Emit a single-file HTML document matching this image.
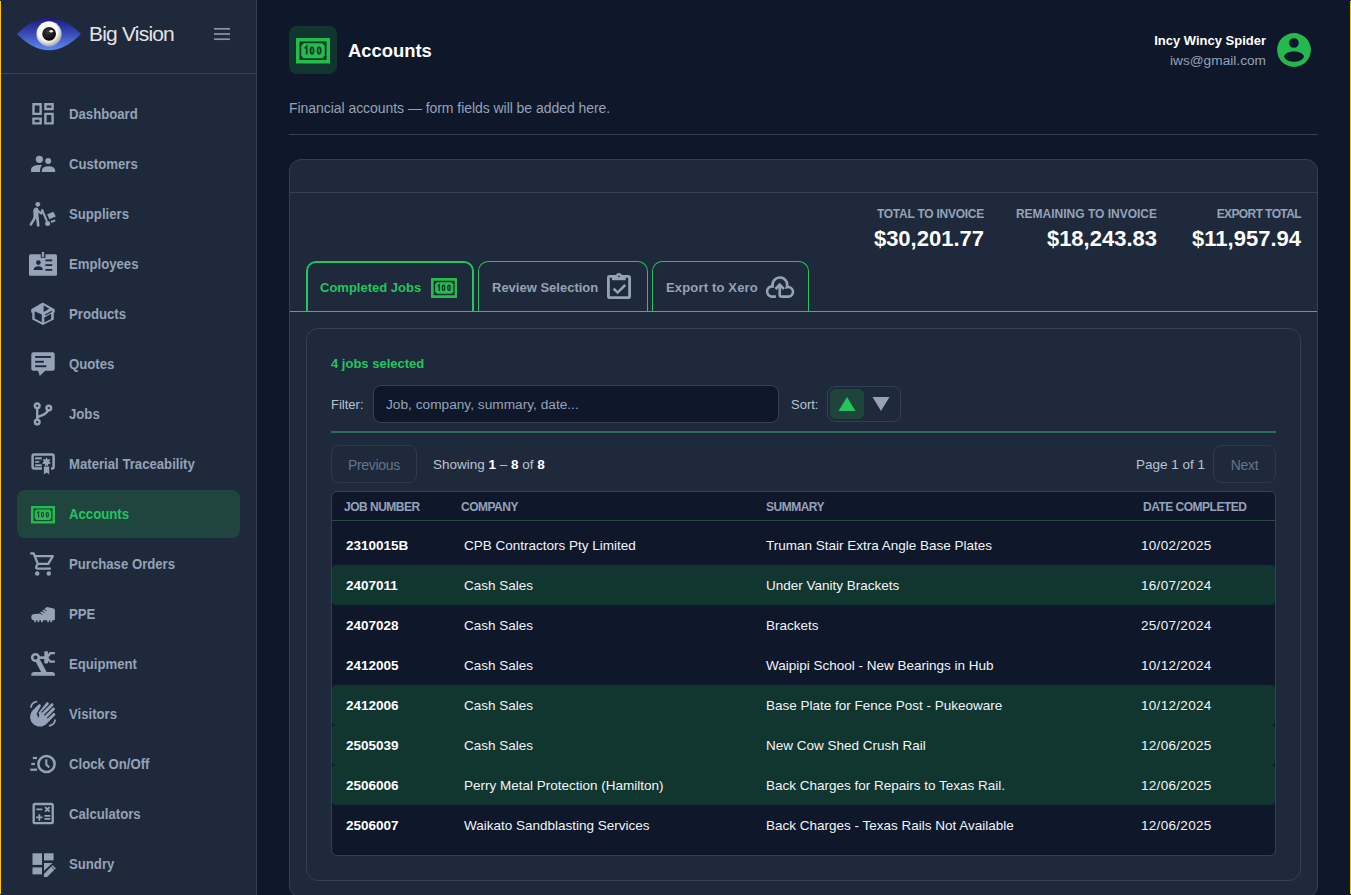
<!DOCTYPE html>
<html><head><meta charset="utf-8"><title>Accounts</title>
<style>
*{box-sizing:border-box;margin:0;padding:0}
html,body{width:1351px;height:895px;overflow:hidden;background:#0f172a;font-family:"Liberation Sans",sans-serif;}
.abs{position:absolute}
.t{position:absolute;white-space:nowrap}
#side{position:absolute;left:0;top:0;width:257px;height:895px;background:#1e293b;border-right:1px solid #334155}
#side .sep{position:absolute;left:0;top:73px;width:256px;height:1px;background:#334155}
.nav{position:absolute;left:17px;width:223px;height:48px;border-radius:8px}
.nav span{position:absolute;left:52px;top:0;line-height:48px;font-size:14px;font-weight:bold;color:#94a3b8;white-space:nowrap;transform:scaleX(0.94);transform-origin:0 0}
.nav.active{background:#1f453e}
.nav.active span{color:#22c55e}
.frame{position:absolute;top:1px;width:1px;height:893px;background:#ffc300}
#card{position:absolute;left:289px;top:159px;width:1029px;height:739px;background:#1e293b;border:1px solid #334155;border-radius:12px}
.tab{position:absolute;top:261px;height:51px;border:1px solid #22c55e;border-bottom:none;border-radius:10px 10px 0 0;background:#1e293b}
.tab span{position:absolute;top:0;line-height:52px;font-size:13px;font-weight:bold;color:#94a3b8;white-space:nowrap}
.tab.active{border-width:2px;border-bottom:none}
.tab.active span{color:#22c55e;line-height:50px}
#inner{position:absolute;left:306px;top:328px;width:995px;height:553px;border:1px solid #334155;border-radius:12px;background:#1e293b}
.btn{position:absolute;top:445px;height:38px;border:1px solid #2d3a4d;border-radius:8px}
.btn span{position:absolute;left:0;right:0;top:1px;text-align:center;line-height:36px;font-size:14px;letter-spacing:-0.3px;color:#64748b}
#table{position:absolute;left:331px;top:491px;width:945px;height:365px;background:#0f172a;border:1px solid #334155;border-radius:6px;overflow:hidden}
.th{position:absolute;top:1px;line-height:29px;font-size:12px;font-weight:bold;color:#94a3b8;letter-spacing:-0.5px;white-space:nowrap}
.row{position:absolute;left:0;width:943px;height:40px;border-radius:4px}
.row.sel{background:#11352f}
.row span{position:absolute;top:1px;line-height:40px;font-size:13.5px;color:#f1f5f9;white-space:nowrap}
.row span.jn{font-weight:bold;color:#fff}
</style></head><body>
<div id="side">
  <div class="sep"></div>
  <svg class="abs" style="left:14px;top:14px" width="72" height="40" viewBox="14 14 72 40">
<defs><linearGradient id="eg" x1="0" y1="0" x2="0" y2="1"><stop offset="0" stop-color="#1c1a7c"/><stop offset="0.5" stop-color="#3a4cb8"/><stop offset="1" stop-color="#5b8ef0"/></linearGradient>
<radialGradient id="wb" cx="0.45" cy="0.4" r="0.6"><stop offset="0.6" stop-color="#ffffff"/><stop offset="1" stop-color="#a8a8a8"/></radialGradient>
<radialGradient id="pp" cx="0.4" cy="0.35" r="0.7"><stop offset="0" stop-color="#3a3a3a"/><stop offset="1" stop-color="#000"/></radialGradient></defs>
<path d="M17 34 Q49 1.5 81 34 Q49 66.5 17 34 Z" fill="url(#eg)"/>
<circle cx="49" cy="33.8" r="12.6" fill="url(#wb)"/>
<circle cx="49.1" cy="33.8" r="6.9" fill="url(#pp)"/>
<ellipse cx="51.2" cy="31.3" rx="1.9" ry="1.3" fill="#fff" opacity="0.9"/>
</svg>
  <div class="abs" style="left:89px;top:20px;font-size:21px;color:#e2e4e8;letter-spacing:-0.8px;line-height:28px">Big Vision</div>
  <svg class="abs" style="left:210px;top:24px" width="24" height="20" viewBox="210 24 24 20"><g stroke="#8795aa" stroke-width="1.7"><line x1="214" y1="28.8" x2="230" y2="28.8"/><line x1="214" y1="34" x2="230" y2="34"/><line x1="214" y1="39.2" x2="230" y2="39.2"/></g></svg>
  <div class="nav" style="top:90px"><span>Dashboard</span></div>
<div class="nav" style="top:140px"><span>Customers</span></div>
<div class="nav" style="top:190px"><span>Suppliers</span></div>
<div class="nav" style="top:240px"><span>Employees</span></div>
<div class="nav" style="top:290px"><span>Products</span></div>
<div class="nav" style="top:340px"><span>Quotes</span></div>
<div class="nav" style="top:390px"><span>Jobs</span></div>
<div class="nav" style="top:440px"><span>Material Traceability</span></div>
<div class="nav active" style="top:490px"><span>Accounts</span></div>
<div class="nav" style="top:540px"><span>Purchase Orders</span></div>
<div class="nav" style="top:590px"><span>PPE</span></div>
<div class="nav" style="top:640px"><span>Equipment</span></div>
<div class="nav" style="top:690px"><span>Visitors</span></div>
<div class="nav" style="top:740px"><span>Clock On/Off</span></div>
<div class="nav" style="top:790px"><span>Calculators</span></div>
<div class="nav" style="top:840px"><span>Sundry</span></div>
<svg class="abs" style="left:0;top:0" width="257" height="895"><g transform="translate(26,98)"><g transform="translate(2.7,1.5) scale(1.194)"><path fill="#94a3b8" d="M19 5v2h-4V5h4M9 5v6H5V5h4m10 8v6h-4v-6h4M9 17v2H5v-2h4M21 3h-8v6h8V3zM11 3H3v10h8V3zm10 8h-8v10h8V11zm-10 4H3v6h8v-6z"/></g></g><g transform="translate(26,148)"><g fill="#94a3b8"><circle cx="13.4" cy="11.3" r="3.6"/><circle cx="22.2" cy="13" r="3"/>
<path d="M5.1 24.1 V21.2 Q5.4 17.1 13.5 16.9 L16.1 16.9 Q14.3 18.6 14.1 21.2 L14.1 24.1 Z"/>
<path d="M15.9 24.1 V22.2 Q16.3 18.2 22.5 18.2 Q28.7 18.2 29.1 22.2 V24.1 Z"/></g></g><g transform="translate(26,198)"><g fill="#94a3b8" stroke="#94a3b8" stroke-linecap="round">
<circle cx="11.8" cy="6.3" r="2.4" stroke="none"/>
<path d="M7.3 12.5 Q7.8 9.6 10.3 9.6 Q12.6 9.7 12.6 12.5 L12.4 20.4 L7.5 20.4 Z" stroke="none"/>
<line x1="8.8" y1="19.8" x2="4.9" y2="26.4" stroke-width="2.6"/>
<line x1="11.4" y1="19.8" x2="12.2" y2="27.3" stroke-width="2.7"/>
<polyline points="11.8,12.8 15.3,15.6 16.4,12.4" fill="none" stroke-width="2.1" stroke-linejoin="round"/>
<line x1="16.3" y1="12.3" x2="20.6" y2="22.5" stroke-width="2.1"/>
<circle cx="21.6" cy="25.4" r="2.5" stroke="none"/>
<polygon points="21.1,16.3 27.4,13.7 29.8,18.6 23.4,21.3" stroke="none"/>
<polygon points="24.6,23 28.9,21.4 29.6,23.3 25.3,25" stroke="none"/></g></g><g transform="translate(26,248)"><rect x="3" y="6.3" width="28" height="21.5" rx="1.6" fill="#94a3b8"/>
<rect x="14.8" y="3" width="4.6" height="6.8" fill="#1e293b"/>
<rect x="15.9" y="3.9" width="2.2" height="5" fill="#94a3b8"/>
<g fill="#1e293b"><circle cx="12.4" cy="14.6" r="2.3"/><path d="M7.6 21.9 Q8 18.3 12.25 18.3 Q16.5 18.3 16.9 21.9 Z"/>
<rect x="19.4" y="11.5" width="6.8" height="1.8"/><rect x="19.4" y="16.2" width="6.8" height="1.8"/><rect x="19.4" y="21" width="6.8" height="1.8"/></g></g><g transform="translate(26,298)"><polygon fill="#94a3b8" points="16.7,4.6 28.7,11.2 28.7,14.6 27.8,14.8 27.8,21.6 16.9,27 6.3,21.6 6.3,14.8 5.2,14.6 5.2,11.2"/>
<g fill="#1e293b"><polygon points="8.6,13.3 15.8,16.6 15.8,24.2 8.6,20.6"/><polygon points="17.6,7.3 23.3,10.7 17.6,14.0"/>
<polygon points="18.3,19.4 25.1,15.8 25.1,21 18.3,24.5"/></g>
<line x1="19.2" y1="17" x2="26" y2="13.2" stroke="#1e293b" stroke-width="1.3"/></g><g transform="translate(26,348)"><path fill="#94a3b8" d="M7.3 4.2 H26.7 Q28.7 4.2 28.7 6.2 V20.8 Q28.7 22.8 26.7 22.8 H19.2 L13.8 28 L12 22.8 H7.3 Q5.3 22.8 5.3 20.8 V6.2 Q5.3 4.2 7.3 4.2 Z"/>
<g fill="#1e293b"><rect x="9.1" y="8" width="15.8" height="1.9"/><rect x="9.1" y="12.8" width="8.8" height="1.9"/><rect x="9.1" y="17.3" width="11.2" height="1.9"/></g></g><g transform="translate(26,398)"><g fill="none" stroke="#94a3b8" stroke-width="2.4"><circle cx="11.2" cy="7.8" r="2.35"/><circle cx="22.8" cy="10.1" r="2.35"/><circle cx="11.2" cy="24.1" r="2.35"/>
<line x1="11.2" y1="10.2" x2="11.2" y2="21.7"/><path d="M11.4 19.2 C14 17.4 19.5 17.6 21.8 12.4"/></g></g><g transform="translate(26,448)"><path fill="none" stroke="#94a3b8" stroke-width="2.5" d="M16 20.6 H8.1 Q6.6 20.6 6.6 19.1 V8.1 Q6.6 6.6 8.1 6.6 H26.1 Q27.6 6.6 27.6 8.1 V19.1 Q27.6 20.6 26.1 20.6 H25.1"/>
<g fill="#94a3b8"><rect x="9.1" y="9.3" width="6.7" height="1.7"/><rect x="9.1" y="13.1" width="4.2" height="1.7"/><rect x="9.1" y="16.3" width="6.7" height="1.7"/>
<polygon points="20.5,9.2 21.7,11.6 24.2,11.1 23.3,13.6 24.9,15.6 22.3,15.9 21.7,18.4 20.5,16.9 19.3,18.4 18.7,15.9 16.1,15.6 17.7,13.6 16.8,11.1 19.3,11.6"/>
<path d="M17.9 18.6 H23.2 V26.6 L20.55 24.6 L17.9 26.6 Z"/></g>
<g fill="#94a3b8" opacity="0.45"><rect x="9.1" y="11.2" width="6.7" height="1"/><rect x="9.1" y="18.3" width="6.7" height="1"/></g></g><g transform="translate(26,548)"><g fill="none" stroke="#94a3b8" stroke-width="2.3" stroke-linejoin="round"><path d="M4.2 5.3 H7.6 L11.8 15.8 M8.6 8.1 H26.8 L22.2 15.8 H11.8 L10.3 18.5 Q9.7 20.7 11.6 20.7 H24.9"/></g>
<g fill="#94a3b8"><circle cx="11.2" cy="25.5" r="2.2"/><circle cx="22.8" cy="25.5" r="2.2"/></g></g><g transform="translate(26,598)"><path fill="#94a3b8" d="M5.3 19.2 Q5.3 16.2 8.4 16 L13 15.7 L20 9.6 Q21 8.8 22.2 9.2 L27.8 10.6 Q28.9 11 28.9 12.2 V21.4 Q28.9 22.2 28 22.2 H7.8 Q5.3 22 5.3 19.2 Z"/>
<g fill="#94a3b8"><polygon points="8,22 10.2,22 9.8,24.2 8.4,24.2"/><polygon points="11.3,22 13.5,22 13.1,24.2 11.7,24.2"/><polygon points="14.9,22 17.1,22 16.7,24.2 15.3,24.2"/><polygon points="21,22 23.2,22 22.8,24.2 21.4,24.2"/><polygon points="24.1,22 26.3,22 25.9,24.2 24.5,24.2"/></g>
<g stroke="#1e293b" stroke-width="0.9"><line x1="13.6" y1="15.1" x2="16.4" y2="16.5"/><line x1="15.8" y1="13.2" x2="18.6" y2="14.6"/><line x1="18" y1="11.3" x2="20.6" y2="12.8"/></g></g><g transform="translate(26,648)"><g fill="#94a3b8"><path d="M5.3 27.7 V26.6 Q5.3 24 8.2 24 H26 Q28.9 24 28.9 26.6 V27.7 Z"/>
<polygon points="9.4,13.2 13.8,11.2 20.8,24.2 15.2,24.2"/>
<rect x="12.5" y="8.3" width="6.5" height="2.7"/><rect x="18.3" y="3.3" width="3.7" height="12.2" rx="1"/></g>
<circle cx="9.5" cy="9.5" r="3.3" fill="none" stroke="#94a3b8" stroke-width="2.6"/>
<path fill="none" stroke="#94a3b8" stroke-width="2.3" d="M21 9.6 L24.2 5.2 H28.9 M21 9.6 L24.2 13.7 H28.9"/></g><g transform="translate(26,698)"><g transform="translate(3.03,1.68) scale(1.17)"><path fill="#94a3b8" d="M23 17c0 3.31-2.69 6-6 6v-1.5c2.48 0 4.5-2.02 4.5-4.5H23zM1 7c0-3.31 2.69-6 6-6v1.5C4.52 2.5 2.5 4.52 2.5 7H1zm7.01-2.68l-4.6 4.6c-3.22 3.22-3.22 8.45 0 11.67s8.45 3.22 11.67 0l7.07-7.07c.49-.49.49-1.28 0-1.77-.49-.49-1.28-.49-1.77 0l-4.42 4.42-.71-.71 6.54-6.54c.49-.49.49-1.28 0-1.77s-1.28-.49-1.77 0L13.5 13.69l-.71-.71 7.78-7.78c.49-.49.49-1.28 0-1.77-.49-.49-1.28-.49-1.77 0l-7.78 7.78-.69-.7 6.19-6.19c.49-.49.49-1.28 0-1.77-.49-.49-1.28-.49-1.77 0L7.9 11.4c1.09 1.1 1.1 2.86.03 3.97l-.71-.71c.39-.39.39-1.02 0-1.41l-.35-.35c-.2-.2-.31-.47-.31-.74 0-.27.11-.54.31-.74L9.78 6.1c.49-.49.49-1.28 0-1.77-.48-.5-1.28-.5-1.77-.01z"/></g></g><g transform="translate(26,748)"><g fill="none" stroke="#94a3b8"><circle cx="20.5" cy="16" r="8.1" stroke-width="2.5"/><path d="M20.3 11.3 V16.6 L23.2 19.5" stroke-width="2.1"/>
<line x1="6.8" y1="10" x2="11" y2="10" stroke-width="2.2"/><line x1="5.3" y1="16" x2="8.9" y2="16" stroke-width="2.2"/><line x1="4.2" y1="21.7" x2="11" y2="21.7" stroke-width="2.2"/></g></g><g transform="translate(26,798)"><g transform="translate(2.93,1.3) scale(1.19)"><path fill="#94a3b8" d="M19 3H5c-1.1 0-2 .9-2 2v14c0 1.1.9 2 2 2h14c1.1 0 2-.9 2-2V5c0-1.1-.9-2-2-2zm0 16H5V5h14v14z M6.25 7.72h5v1.5h-5z M13 15.75h5v1.5h-5z M13 13.25h5v1.5h-5z M8 18h1.5v-2h2v-1.5h-2v-2H8v2H6v1.5h2z M14.09 10.95l1.41-1.41 1.41 1.41 1.06-1.06-1.41-1.42 1.41-1.41L16.91 6 15.5 7.41 14.09 6l-1.06 1.06 1.41 1.41-1.41 1.42z"/></g></g><g transform="translate(26,848)"><g fill="#94a3b8"><rect x="6.5" y="5.3" width="9.5" height="11.6"/><rect x="18" y="5.3" width="9.6" height="7.1"/><rect x="6.5" y="19.4" width="9.5" height="7"/>
<polygon points="18,15 26.6,15 18,22.8"/><polygon points="17.9,25.9 26.5,17.3 29.8,20.3 21.2,28.9 17.9,28.9"/></g>
<line x1="25.3" y1="18.5" x2="28.4" y2="21.6" stroke="#1e293b" stroke-width="0.8"/></g></svg><svg class="abs" style="left:31px;top:506px" width="24" height="17.5" viewBox="0 0 40 30" preserveAspectRatio="none">
<rect x="0" y="0" width="40" height="30" fill="#23bd4c"/>
<rect x="4.1" y="4.1" width="31.8" height="21.8" fill="#1f453e"/>
<polygon points="9.2,6.2 30.8,6.2 33.8,9.2 33.8,20.8 30.8,23.8 9.2,23.8 6.2,20.8 6.2,9.2" fill="#23bd4c"/>
<g fill="none" stroke="#1f453e" stroke-width="2.1"><path d="M10.2 12.2 L12.6 10.1 V19.5"/><ellipse cx="18.9" cy="14.75" rx="1.8" ry="3.8"/><ellipse cx="27.2" cy="14.75" rx="1.8" ry="3.8"/></g>
</svg>
</div>

<div class="abs" style="left:289px;top:26px;width:48px;height:48px;border-radius:8px;background:#11352f"></div>
<svg class="abs" style="left:296px;top:38px" width="34" height="25.5" viewBox="0 0 40 30" preserveAspectRatio="none">
<rect x="0" y="0" width="40" height="30" fill="#23bd4c"/>
<rect x="4.1" y="4.1" width="31.8" height="21.8" fill="#11352f"/>
<polygon points="9.2,6.2 30.8,6.2 33.8,9.2 33.8,20.8 30.8,23.8 9.2,23.8 6.2,20.8 6.2,9.2" fill="#23bd4c"/>
<g fill="none" stroke="#11352f" stroke-width="2.1"><path d="M10.2 12.2 L12.6 10.1 V19.5"/><ellipse cx="18.9" cy="14.75" rx="1.8" ry="3.8"/><ellipse cx="27.2" cy="14.75" rx="1.8" ry="3.8"/></g>
</svg>
<div class="t" style="left:348px;top:39px;font-size:18.4px;font-weight:bold;color:#fff;line-height:24px">Accounts</div>
<div class="t" style="left:289px;top:98px;font-size:14px;color:#94a3b8;line-height:20px;letter-spacing:-0.05px">Financial accounts — form fields will be added here.</div>
<div class="abs" style="left:289px;top:134px;width:1029px;height:1px;background:#334155"></div>
<div class="t" style="right:85px;top:32px;font-size:13px;font-weight:bold;color:#fff;line-height:18px">Incy Wincy Spider</div>
<div class="t" style="right:85px;top:51px;font-size:13.7px;color:#94a3b8;line-height:20px">iws@gmail.com</div>
<svg class="abs" style="left:1272px;top:28px" width="44" height="44" viewBox="0 0 44 44">
<circle cx="22" cy="22" r="16.9" fill="#23b94c"/><circle cx="21.9" cy="15" r="4.85" fill="#0f172a"/>
<path d="M12 28.4 C13.5 21.8 30.5 21.8 32 28.4 C30 35.5 14 35.5 12 28.4 Z" fill="#0f172a"/></svg>
<div id="card">
  <div class="abs" style="left:0;top:32px;width:1027px;height:1px;background:#334155"></div>
</div>
<div class="t" style="right:367px;top:206px;font-size:12px;font-weight:bold;color:#94a3b8;letter-spacing:-0.25px;line-height:16px">TOTAL TO INVOICE</div>
<div class="t" style="right:194px;top:206px;font-size:12px;font-weight:bold;color:#94a3b8;letter-spacing:0px;line-height:16px">REMAINING TO INVOICE</div>
<div class="t" style="right:50px;top:206px;font-size:12px;font-weight:bold;color:#94a3b8;letter-spacing:-0.6px;line-height:16px">EXPORT TOTAL</div>
<div class="t" style="right:367px;top:225px;font-size:22px;font-weight:bold;color:#fff;line-height:28px">$30,201.77</div>
<div class="t" style="right:194px;top:225px;font-size:22px;font-weight:bold;color:#fff;line-height:28px">$18,243.83</div>
<div class="t" style="right:50px;top:225px;font-size:22px;font-weight:bold;color:#fff;line-height:28px">$11,957.94</div>
<div class="tab active" style="left:306px;width:168px"><span style="left:12px">Completed Jobs</span></div>
<div class="tab" style="left:478px;width:170px"><span style="left:13px">Review Selection</span></div>
<div class="tab" style="left:652px;width:157px"><span style="left:13px;letter-spacing:0.17px">Export to Xero</span></div>
<div class="abs" style="left:290px;top:311px;width:1027px;height:1px;background:#22c55e"></div>
<svg class="abs" style="left:431px;top:278px" width="26.4" height="20" viewBox="0 0 40 30" preserveAspectRatio="none">
<rect x="0" y="0" width="40" height="30" fill="#23bd4c"/>
<rect x="4.1" y="4.1" width="31.8" height="21.8" fill="#1e293b"/>
<polygon points="9.2,6.2 30.8,6.2 33.8,9.2 33.8,20.8 30.8,23.8 9.2,23.8 6.2,20.8 6.2,9.2" fill="#23bd4c"/>
<g fill="none" stroke="#1e293b" stroke-width="2.1"><path d="M10.2 12.2 L12.6 10.1 V19.5"/><ellipse cx="18.9" cy="14.75" rx="1.8" ry="3.8"/><ellipse cx="27.2" cy="14.75" rx="1.8" ry="3.8"/></g>
</svg>
<svg class="abs" style="left:600px;top:268px" width="36" height="36" viewBox="0 0 36 36">
<rect x="8.4" y="8.4" width="21.2" height="21.2" rx="1.4" fill="none" stroke="#94a3b8" stroke-width="2.8"/>
<rect x="12" y="7" width="13.7" height="5.2" fill="#94a3b8"/><circle cx="18.9" cy="8" r="2.9" fill="#94a3b8"/><circle cx="18.9" cy="8.3" r="0.9" fill="#1e293b"/>
<polyline points="13.6,20.6 17.6,24.6 25.2,17" fill="none" stroke="#94a3b8" stroke-width="2.5"/></svg>
<svg class="abs" style="left:762px;top:268px" width="36" height="36" viewBox="0 0 36 36">
<path fill="none" stroke="#94a3b8" stroke-width="2.6" d="M13.9 28.6 H9.8 A5.1 5.1 0 1 1 10.6 18.4 A7.4 7.4 0 1 1 24.9 19.2 A4.8 4.8 0 1 1 26.6 28.6 H19.6 Q17.7 28.6 17.7 26.7 V16.8 M13.5 21 L17.7 16.6 L21.9 21"/></svg>
<div id="inner"></div>
<div class="t" style="left:331px;top:355px;font-size:13px;font-weight:bold;color:#22c55e;line-height:18px">4 jobs selected</div>
<div class="t" style="left:331px;top:396px;font-size:13px;color:#b9c4d2;line-height:18px">Filter:</div>
<div class="abs" style="left:373px;top:385px;width:406px;height:38px;background:#0f172a;border:1px solid #334155;border-radius:8px"></div>
<div class="t" style="left:386px;top:396px;font-size:13.7px;color:#94a3b8;line-height:18px">Job, company, summary, date...</div>
<div class="t" style="left:791px;top:396px;font-size:13px;color:#b9c4d2;line-height:18px">Sort:</div>
<div class="abs" style="left:827px;top:386px;width:74px;height:36px;border:1px solid #334155;border-radius:8px"></div>
<div class="abs" style="left:830px;top:389px;width:34px;height:30px;border-radius:6px;background:#1f453a"></div>
<svg class="abs" style="left:838px;top:396px" width="18" height="16" viewBox="0 0 18 16"><polygon points="9,1 17.5,15 0.5,15" fill="#22c55e"/></svg>
<svg class="abs" style="left:872px;top:396px" width="18" height="16" viewBox="0 0 18 16"><polygon points="0.5,1 17.5,1 9,15" fill="#94a3b8"/></svg>
<div class="abs" style="left:331px;top:431px;width:945px;height:2px;background:#2f6b55"></div>
<div class="btn" style="left:331px;width:86px"><span>Previous</span></div>
<div class="t" style="left:433px;top:456px;font-size:13.5px;color:#b9c4d2;line-height:18px">Showing <b style="color:#fff">1</b> – <b style="color:#fff">8</b> of <b style="color:#fff">8</b></div>
<div class="t" style="right:146px;top:456px;font-size:13.5px;color:#b9c4d2;line-height:18px">Page 1 of 1</div>
<div class="btn" style="left:1213px;width:63px"><span>Next</span></div>
<div id="table">
  <div class="th" style="left:12px">JOB NUMBER</div>
  <div class="th" style="left:129px">COMPANY</div>
  <div class="th" style="left:434px">SUMMARY</div>
  <div class="th" style="left:811px">DATE COMPLETED</div>
  <div class="abs" style="left:0;top:28px;width:943px;height:1px;background:#2b4a44"></div>
  <div class="row" style="top:33px"><span class="jn" style="left:14px">2310015B</span><span style="left:132px">CPB Contractors Pty Limited</span><span style="left:434px">Truman Stair Extra Angle Base Plates</span><span style="left:809px;letter-spacing:0.3px">10/02/2025</span></div>
<div class="row sel" style="top:73px"><span class="jn" style="left:14px">2407011</span><span style="left:132px">Cash Sales</span><span style="left:434px">Under Vanity Brackets</span><span style="left:809px;letter-spacing:0.3px">16/07/2024</span></div>
<div class="row" style="top:113px"><span class="jn" style="left:14px">2407028</span><span style="left:132px">Cash Sales</span><span style="left:434px">Brackets</span><span style="left:809px;letter-spacing:0.3px">25/07/2024</span></div>
<div class="row" style="top:153px"><span class="jn" style="left:14px">2412005</span><span style="left:132px">Cash Sales</span><span style="left:434px">Waipipi School - New Bearings in Hub</span><span style="left:809px;letter-spacing:0.3px">10/12/2024</span></div>
<div class="row sel" style="top:193px"><span class="jn" style="left:14px">2412006</span><span style="left:132px">Cash Sales</span><span style="left:434px">Base Plate for Fence Post - Pukeoware</span><span style="left:809px;letter-spacing:0.3px">10/12/2024</span></div>
<div class="row sel" style="top:233px"><span class="jn" style="left:14px">2505039</span><span style="left:132px">Cash Sales</span><span style="left:434px">New Cow Shed Crush Rail</span><span style="left:809px;letter-spacing:0.3px">12/06/2025</span></div>
<div class="row sel" style="top:273px"><span class="jn" style="left:14px">2506006</span><span style="left:132px">Perry Metal Protection (Hamilton)</span><span style="left:434px">Back Charges for Repairs to Texas Rail.</span><span style="left:809px;letter-spacing:0.3px">12/06/2025</span></div>
<div class="row" style="top:313px"><span class="jn" style="left:14px">2506007</span><span style="left:132px">Waikato Sandblasting Services</span><span style="left:434px">Back Charges - Texas Rails Not Available</span><span style="left:809px;letter-spacing:0.3px">12/06/2025</span></div>

</div>

<div class="frame" style="left:0"></div>
<div class="frame" style="left:1350px"></div>
</body></html>
